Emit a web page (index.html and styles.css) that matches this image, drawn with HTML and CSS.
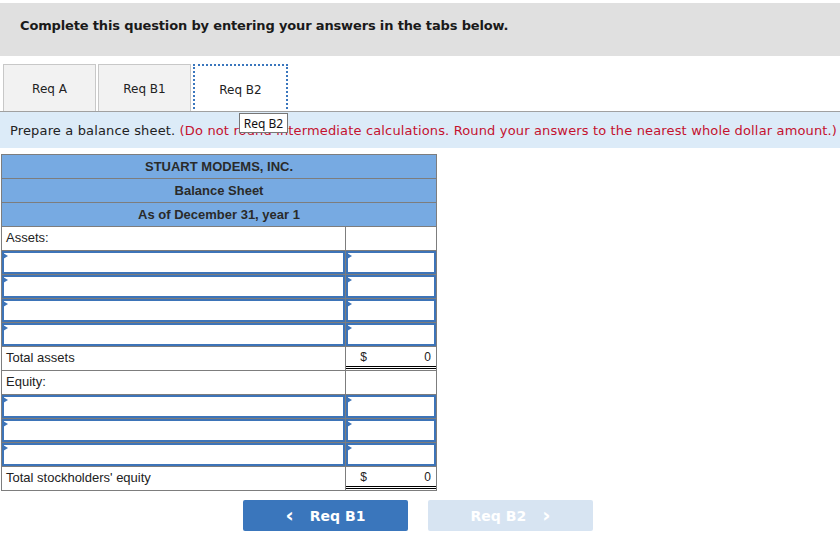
FILE: index.html
```html
<!DOCTYPE html>
<html>
<head>
<meta charset="utf-8">
<link rel="stylesheet" href="styles.css">
</head>
<body>
<div class="page">
  <div class="banner">Complete this question by entering your answers in the tabs below.</div>
  <div class="tabs">
    <div class="tab">Req A</div>
    <div class="tab">Req B1</div>
    <div class="tab active">Req B2</div>
  </div>
  <div class="instr">
    <span class="tip">Req B2</span>
    Prepare a balance sheet. <span class="red">(Do not round intermediate calculations. Round your answers to the nearest whole dollar amount.)</span>
  </div>
  <table class="bs">
    <tr class="hd"><td colspan="2">STUART MODEMS, INC.</td></tr>
    <tr class="hd"><td colspan="2">Balance Sheet</td></tr>
    <tr class="hd"><td colspan="2">As of December 31, year 1</td></tr>
    <tr><td class="lbl">Assets:</td><td class="amt"></td></tr>
    <tr class="in"><td><div class="box"></div></td><td><div class="box"></div></td></tr>
    <tr class="in"><td><div class="box"></div></td><td><div class="box"></div></td></tr>
    <tr class="in"><td><div class="box"></div></td><td><div class="box"></div></td></tr>
    <tr class="in"><td><div class="box"></div></td><td><div class="box"></div></td></tr>
    <tr><td class="lbl">Total assets</td><td class="amt total"><div class="tot"><span>$</span><span>0</span></div></td></tr>
    <tr><td class="lbl">Equity:</td><td class="amt"></td></tr>
    <tr class="in"><td><div class="box"></div></td><td><div class="box"></div></td></tr>
    <tr class="in"><td><div class="box"></div></td><td><div class="box"></div></td></tr>
    <tr class="in"><td><div class="box"></div></td><td><div class="box"></div></td></tr>
    <tr><td class="lbl">Total stockholders' equity</td><td class="amt total"><div class="tot"><span>$</span><span>0</span></div></td></tr>
  </table>
  <div class="nav">
    <div class="btn prev"><span class="chev">&lsaquo;</span>Req B1</div>
    <div class="btn next">Req B2<span class="chev">&rsaquo;</span></div>
  </div>
</div>
</body>
</html>
```

FILE: styles.css
```css
* { box-sizing: border-box; }
html, body { margin: 0; padding: 0; background: #fff; }
.page { padding-top: 3px; font-family: "DejaVu Sans", Verdana, sans-serif; color: #222; }
.banner {
  height: 53px; background: #e0e0e0; padding: 15px 0 0 20px;
  font-weight: bold; font-size: 13px; letter-spacing: -0.15px; color: #1a1a1a;
}
.tabs { display: flex; padding: 8px 0 0 3px; height: 55px; }
.tab {
  width: 93px; height: 47px; background: #f2f2f2; border: 1px solid #c8c8c8; border-bottom: none;
  display: flex; align-items: center; justify-content: center; font-size: 12px; margin-right: 2px;
  padding-top: 2px;
}
.tab.active { width: 95px; background: #fff; border: 2px dotted #3a76bd; border-bottom: 2px dotted #3a76bd; margin-right: 0; height: 49px; }
.instr {
  position: relative; height: 37px; background: #dcebf8; border-top: 1px solid #a0a0a0;
  padding: 11px 0 0 10px; font-size: 13px; white-space: nowrap; letter-spacing: 0.15px;
}
.red { color: #c4122f; }
.tip {
  position: absolute; left: 239px; top: 1px; width: 49px; height: 20px; background: #fff;
  border: 1px solid #767676; font-size: 12px; letter-spacing: 0; color: #111;
  display: flex; align-items: center; justify-content: center;
  font-family: "Noto Sans", "DejaVu Sans", sans-serif;
}
.bs {
  margin: 6px 0 0 1px; border-collapse: collapse; width: 436px;
  font-family: "Liberation Sans", Arial, sans-serif; font-size: 13px; color: #222;
}
.bs td { border: 1px solid #7d7d7d; height: 24px; padding: 0; }
.bs tr.hd td { background: #77aae2; text-align: center; font-weight: bold; font-size: 13px; color: #2a2a2a; }
.bs td.lbl { width: 345px; padding: 0 0 2px 4px; }
.bs td.amt { width: 91px; }
.bs tr.in td { padding: 0; }
.box { position: relative; height: 23px; border: 2px solid #3d74b8; background: #fff; }
.box::before {
  content: ""; position: absolute; left: -1px; top: 0;
  border-left: 5px solid #3d74b8; border-top: 3px solid transparent; border-bottom: 3px solid transparent;
}
.bs td.total { padding: 0; border-top: 1px solid #000; }
.tot {
  display: flex; justify-content: space-between; padding: 0 5px 1px 14px; height: 21px; align-items: center;
  border-bottom: 3px double #000; color: #222; font-size: 12px;
}
.nav { display: flex; gap: 20px; padding: 9px 0 0 243px; }
.btn {
  width: 165px; height: 31px; border-radius: 2px; color: #fff; font-weight: bold; font-size: 14px;
  display: flex; align-items: center; justify-content: center; font-family: "DejaVu Sans", Verdana, sans-serif;
}
.btn.prev { background: #3a76bc; }
.btn.next { background: #d7e4f2; }
.chev { font-size: 20px; font-weight: bold; line-height: 1; position: relative; top: -1px; }
.prev .chev { margin-right: 16px; }
.next .chev { margin-left: 16px; }
```
